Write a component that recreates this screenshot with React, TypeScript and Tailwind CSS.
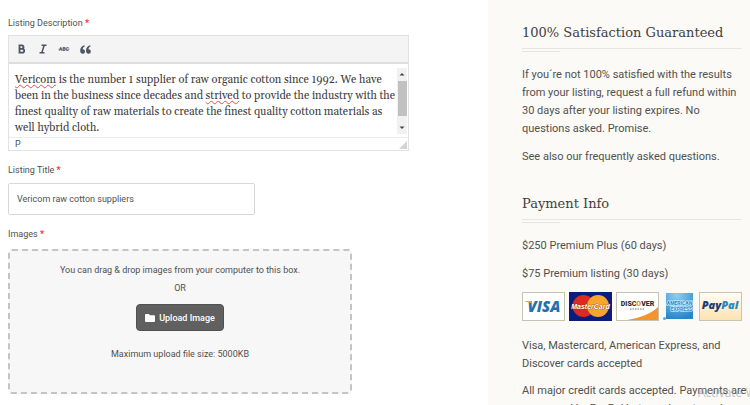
import type { ReactNode } from 'react';

const cards = [
  { name: 'Visa', art: <VisaCard /> },
  { name: 'MasterCard', art: <MasterCard /> },
  { name: 'Discover', art: <DiscoverCard /> },
  { name: 'American Express', art: <AmexCard /> },
  { name: 'PayPal', art: <PayPalCard /> }
];

function VisaCard() {
  return (
    <svg width="43" height="29" viewBox="0 0 43 29" aria-hidden="true">
      <rect x="0.5" y="0.5" width="42" height="28" fill="#fff" stroke="#c4c4b6" />
      <text x="22" y="20" textAnchor="middle" fontSize="15" fontWeight="800" fontStyle="italic" fontFamily="Open Sans, sans-serif" fill="#2470ad">VISA</text>
      <path d="M3 9h6l2 4-2-2-6-1.500z" fill="#f0a52c" />
    </svg>
  );
}

function MasterCard() {
  return (
    <svg width="43" height="29" viewBox="0 0 43 29" aria-hidden="true">
      <rect width="43" height="29" fill="#0b1c7c" />
      <circle cx="14.500" cy="14" r="11" fill="#dc2a20" />
      <circle cx="29" cy="14" r="11" fill="#f6a52d" />
      <text x="21.500" y="17" textAnchor="middle" fontSize="7" fontWeight="700" fontStyle="italic" fontFamily="Liberation Sans, sans-serif" fill="#fff" stroke="#7c2b25" strokeWidth="0.6" paintOrder="stroke">MasterCard</text>
    </svg>
  );
}

function DiscoverCard() {
  return (
    <svg width="43" height="29" viewBox="0 0 43 29" aria-hidden="true">
      <rect x="0.5" y="0.5" width="42" height="28" fill="#fff" stroke="#c4c4b6" />
      <path d="M42 15C36 21 25 26 11 28h31z" fill="#f5932c" />
      <text x="21.500" y="14" textAnchor="middle" fontSize="7" fontWeight="900" fontFamily="Roboto, sans-serif" fill="#33302e">DISC<tspan fill="#f28322">O</tspan>VER</text>
      <path d="M14 17h15" stroke="#77706b" strokeDasharray="1.500 1" />
    </svg>
  );
}

function AmexCard() {
  return (
    <svg width="32" height="29" viewBox="0 0 32 29" aria-hidden="true">
      <defs>
        <radialGradient id="amex" cx="0.4" cy="0.1" r="0.9">
          <stop offset="0" stopColor="#8fcdf0" />
          <stop offset="1" stopColor="#2688ca" />
        </radialGradient>
      </defs>
      <rect x="3" y="1" width="27" height="26" fill="url(#amex)" />
      <circle cx="1.500" cy="26.500" r="1.500" fill="#5fabd8" />
      <text x="16.500" y="13" textAnchor="middle" fontSize="5" fontWeight="700" fontFamily="Roboto, sans-serif" fill="#2688ca" stroke="#dff2fc" strokeWidth="1.200" paintOrder="stroke">AMERICAN</text>
      <text x="18.500" y="19" textAnchor="middle" fontSize="5" fontWeight="700" fontFamily="Roboto, sans-serif" fill="#2688ca" stroke="#dff2fc" strokeWidth="1.200" paintOrder="stroke">EXPRESS</text>
    </svg>
  );
}

function PayPalCard() {
  return (
    <svg width="43" height="29" viewBox="0 0 43 29" aria-hidden="true">
      <defs>
        <linearGradient id="paypal" x2="0" y2="1">
          <stop offset="0" stopColor="#fffdf7" />
          <stop offset="1" stopColor="#fce2b0" />
        </linearGradient>
      </defs>
      <rect x="0.5" y="0.5" width="42" height="28" fill="url(#paypal)" stroke="#c9c4b0" />
      <text x="21" y="17" textAnchor="middle" fontSize="11" fontWeight="800" fontStyle="italic" fontFamily="Open Sans, sans-serif" fill="#1b3f73">Pay<tspan fill="#2a86bd">Pal</tspan></text>
    </svg>
  );
}

function Required() {
  return <span className="font-bold text-[#ff2a2a]">*</span>;
}

function Misspelled({ children }: { children: ReactNode }) {
  return (
    <span className="underline decoration-[#f04a4a] decoration-wavy decoration-1 underline-offset-1">
      {children}
    </span>
  );
}

function SidebarHeading({ children }: { children: ReactNode }) {
  return (
    <>
      <h2 className="font-['DejaVu_Serif',serif] text-[13px] leading-[18px] text-[#3f3f3f]">{children}</h2>
      <div className="mt-1.5 h-px bg-[#e6e5e0]" />
      <div className="mt-0.5 h-px w-[38px] bg-[#e6e5e0]" />
    </>
  );
}

function Toolbar() {
  return (
    <div className="flex h-[28px] items-center gap-[3px] border-b-2 border-[#dedede] bg-[#f4f4f4] px-1 text-[#4b5563]">
      <button type="button" aria-label="Bold" className="flex h-5 w-[18px] items-center justify-center">
        <svg width="8" height="10" viewBox="0 0 8 10" fill="none" stroke="currentColor" strokeWidth="1.800">
          <path d="M1.500 1.400h2.300a1.700 1.700 0 0 1 0 3.400H1.500M1.500 4.800h2.800a1.900 1.900 0 0 1 0 3.800H1.500M1.500.5v9" />
        </svg>
      </button>
      <button type="button" aria-label="Italic" className="flex h-5 w-[18px] items-center justify-center">
        <svg width="8" height="10" viewBox="0 0 8 10" fill="none" stroke="currentColor" strokeWidth="1.500">
          <path d="M2.500 1.200H7.500M0.500 8.800h5M5.200 1.200L2.800 8.800" />
        </svg>
      </button>
      <button type="button" aria-label="Strikethrough" className="flex h-5 w-[18px] items-center justify-center">
        <svg width="12" height="8" viewBox="0 0 12 8">
          <text x="6" y="6" textAnchor="middle" fontSize="5" fontWeight="700" fontFamily="Roboto, sans-serif" fill="currentColor">ABC</text>
          <path d="M0.500 4.200h11" stroke="currentColor" strokeWidth="0.600" />
        </svg>
      </button>
      <button type="button" aria-label="Blockquote" className="flex h-5 w-[18px] items-center justify-center">
        <svg width="11" height="9" viewBox="0 0 11 9" fill="currentColor">
          <path d="M4.300.3C1.700 1 .2 3 .2 5.700c0 1.900 1 3 2.500 3A2.200 2.200 0 0 0 5 6.400C5 5 4 4.200 2.700 4.200 2.800 2.800 3.500 2 4.900 1.300zM10.100.3C7.500 1 6 3 6 5.700c0 1.900 1 3 2.500 3a2.200 2.200 0 0 0 2.300-2.300c0-1.400-1-2.200-2.300-2.200.1-1.400.8-2.200 2.200-2.900z" />
        </svg>
      </button>
    </div>
  );
}

function Editor() {
  return (
    <div className="mt-[5px] max-w-[401px] border border-[#e2e2e2] bg-white">
      <Toolbar />
      <div className="flex h-[73px] overflow-hidden pt-1">
        <div
          role="textbox"
          aria-multiline="true"
          aria-labelledby="description-label"
          contentEditable
          suppressContentEditableWarning
          spellCheck={false}
          className="flex-1 pt-1 pl-1.5 font-[Georgia,Gelasio,'Liberation_Serif',serif] text-[11px] leading-[16px] text-[#3c3c3c] outline-none"
        >
          <Misspelled>Vericom</Misspelled> is the number 1 supplier of raw organic cotton since 1992. We have
          been in the business since decades and <Misspelled>strived</Misspelled> to provide the industry with the
          finest quality of raw materials to create the finest quality cotton materials as
          well hybrid cloth.
        </div>
        <div className="mr-px flex h-[66px] w-[10px] flex-col items-center bg-[#f1f1f1]" aria-hidden="true">
          <svg width="10" height="13" viewBox="0 0 10 13"><path d="M2.500 7.500h5L5 5z" fill="#444" /></svg>
          <div className="h-[35px] w-[9px] bg-[#c1c1c1]" />
          <svg className="mt-auto" width="10" height="13" viewBox="0 0 10 13"><path d="M2.500 5.500h5L5 8z" fill="#444" /></svg>
        </div>
      </div>
      <div className="flex h-[13px] items-end justify-between border-t border-[#ececec] pr-px pl-1.5 leading-[12px]">
        <span>P</span>
        <svg className="mb-px" width="8" height="8" viewBox="0 0 8 8" aria-hidden="true"><path d="M8 0v8H0z" fill="#d4d4d4" /></svg>
      </div>
    </div>
  );
}

function DropBox() {
  return (
    <div className="mt-2 flex h-[145px] max-w-[344px] flex-col items-center rounded border-2 border-dashed border-[#c4c4c4] bg-[#f7f7f7] pt-[10px] leading-[18px]">
      <p>You can drag &amp; drop images from your computer to this box.</p>
      <p>OR</p>
      <button
        type="button"
        className="mt-[7px] flex h-[27px] items-center gap-1 rounded border border-[#505050] bg-[#606060] px-2 font-medium text-white"
      >
        <svg width="10" height="8" viewBox="0 0 10 8" fill="currentColor" aria-hidden="true">
          <path d="M1 0h2.800l1.200 1.200h4a1 1 0 0 1 1 1V7a1 1 0 0 1-1 1H1a1 1 0 0 1-1-1V1a1 1 0 0 1 1-1z" />
        </svg>
        Upload Image
      </button>
      <p className="mt-[14px]">Maximum upload file size: 5000KB</p>
    </div>
  );
}

export default function App() {
  return (
    <div className="relative grid h-screen grid-cols-[488fr_262fr] overflow-hidden bg-white font-[Roboto,sans-serif] text-[#505050]">
      <main className="px-2 pt-[17px] text-[9px]">
        <span id="description-label" className="block leading-[13px]">
          Listing Description <Required />
        </span>
        <Editor />

        <label htmlFor="title" className="mt-[13px] block leading-[13px]">
          Listing Title <Required />
        </label>
        <input
          id="title"
          type="text"
          defaultValue="Vericom raw cotton suppliers"
          className="mt-1.5 block h-8 w-full max-w-[247px] rounded-[2px] border border-[#d8d8d8] px-2 text-[#505050] outline-none"
        />

        <p className="mt-[13px] leading-[13px]">
          Images <Required />
        </p>
        <DropBox />
      </main>

      <aside className="bg-[#fbfaf6] pt-6 pr-2 pl-[34px] text-[11px] leading-[18px]">
        <section>
          <SidebarHeading>100% Satisfaction Guaranteed</SidebarHeading>
          <p className="mt-3.5">
            If you´re not 100% satisfied with the results from your listing, request a full refund within 30 days after your listing expires. No questions asked. Promise.
          </p>
          <p className="mt-2.5">See also our frequently asked questions.</p>
        </section>

        <section className="mt-[29px]">
          <SidebarHeading>Payment Info</SidebarHeading>
          <p className="mt-3.5">$250 Premium Plus (60 days)</p>
          <p className="mt-2.5">$75 Premium listing (30 days)</p>
          <ul className="mt-[9px] flex gap-1">
            {cards.map((card) => (
              <li key={card.name} aria-label={card.name}>{card.art}</li>
            ))}
          </ul>
          <p className="mt-4">Visa, Mastercard, American Express, and Discover cards accepted</p>
          <p className="-mr-2 mt-[9px]">
            All major credit cards accepted. Payments are processed by PayPal but you do not need an
          </p>
        </section>
      </aside>

      <div className="pointer-events-none absolute right-0 bottom-0 w-[52px] overflow-hidden font-['Open_Sans',sans-serif] text-[12px] leading-[24px] whitespace-nowrap text-[#a9a9a9]/70">
        Activate W
      </div>
    </div>
  );
}
